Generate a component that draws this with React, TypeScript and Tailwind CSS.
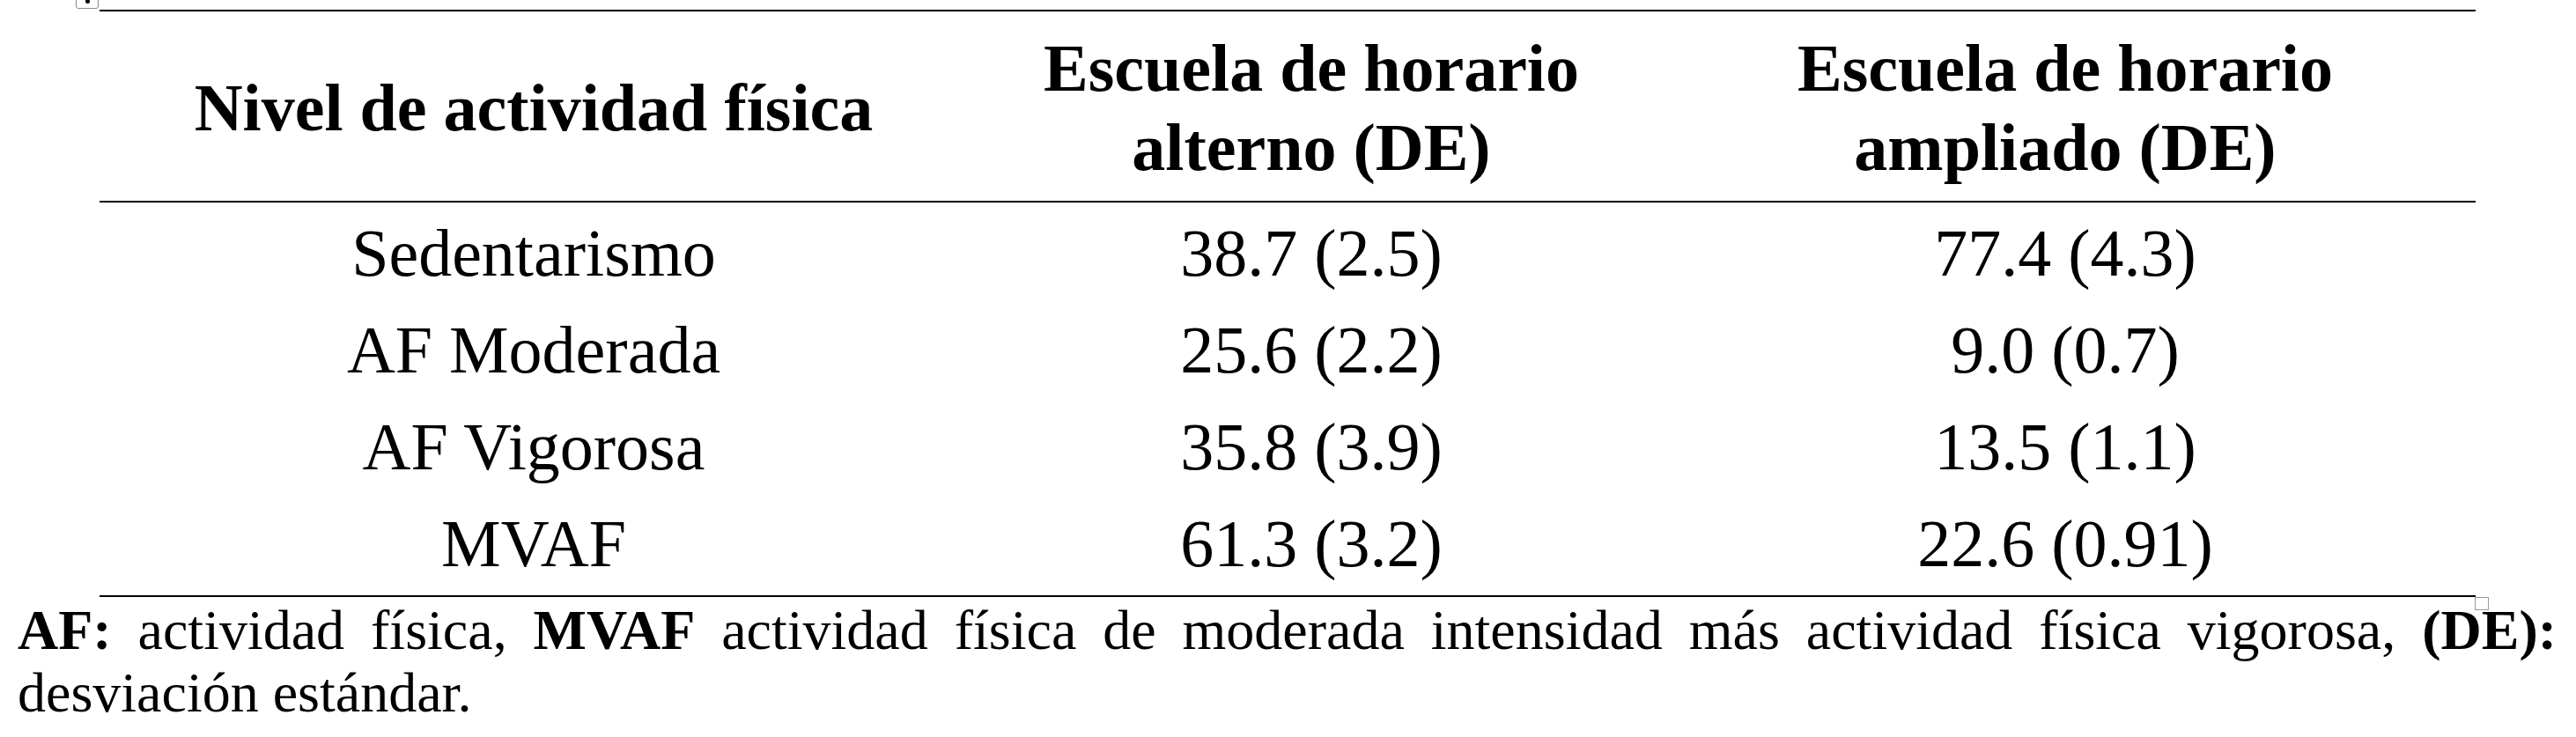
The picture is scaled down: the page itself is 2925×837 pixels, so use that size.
export default function App() {
  const rows = [
    ["Sedentarismo", "38.7 (2.5)", "77.4 (4.3)"],
    ["AF Moderada", "25.6 (2.2)", "9.0 (0.7)"],
    ["AF Vigorosa", "35.8 (3.9)", "13.5 (1.1)"],
    ["MVAF", "61.3 (3.2)", "22.6 (0.91)"],
  ];
  return (
    <div className="relative w-[2925px] h-[837px] overflow-hidden bg-white text-black font-['Liberation_Serif','Times_New_Roman',serif]">
      <div className="absolute left-[86px] top-[-16px] w-[26px] h-[26px] border border-[#8a8a8a] rounded-[3px] bg-white flex items-end justify-center pb-[5px]">
        <div className="w-[5px] h-[5px] rounded-full bg-black" />
      </div>
      <div className="ml-[113px] mt-[11px] w-[2698px]">
        <div className="grid grid-cols-[986px_780px_932px] border-t-2 border-b-2 border-black text-[76px] font-bold leading-[90px] pt-[19px] pb-[16px]">
          <div className="flex items-center justify-center text-center">Nivel de actividad física</div>
          <div className="flex flex-col items-center text-center">
            <span>Escuela de horario</span>
            <span>alterno (DE)</span>
          </div>
          <div className="flex flex-col items-center text-center">
            <span>Escuela de horario</span>
            <span>ampliado (DE)</span>
          </div>
        </div>
        <div className="border-b-2 border-black pt-[2px] pb-[4px] text-[76px] leading-[110px]">
          {rows.map((r) => (
            <div key={r[0]} className="grid grid-cols-[986px_780px_932px] text-center">
              <div>{r[0]}</div>
              <div>{r[1]}</div>
              <div>{r[2]}</div>
            </div>
          ))}
        </div>
      </div>
      <p className="mt-[2px] pl-[20px] pr-[22px] text-[64px] leading-[71px] text-justify">
        <b>AF:</b> actividad física, <b>MVAF</b> actividad física de moderada intensidad más actividad física vigorosa, <b>(DE):</b> desviación estándar.
      </p>
      <div className="absolute left-[2810px] top-[678px] w-[16px] h-[15px] border border-[#9a9a9a]" />
    </div>
  );
}
